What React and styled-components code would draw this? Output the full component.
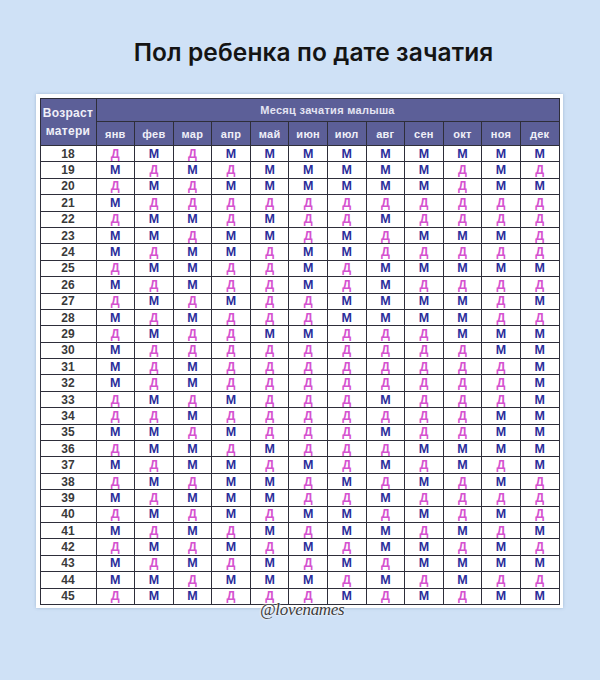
import styled, { createGlobalStyle } from "styled-components";

const GlobalStyle = createGlobalStyle`
    html, body {
        margin: 0;
        padding: 0;
        background: #cfe1f6;
    }
`

const MONTHS = ["янв", "фев", "мар", "апр", "май", "июн", "июл", "авг", "сен", "окт", "ноя", "дек"];

// one string per mother's age, 18..45 (Д = girl, М = boy)
const ROWS = [
    "ДМДМММММММММ",
    "МДМДМММММДМД",
    "ДМДММММММДММ",
    "МДДДДДДДДДДД",
    "ДММДМДДМДДДД",
    "ММДММДМДМММД",
    "МДММДММДДДДД",
    "ДММДДМДМММММ",
    "МДМДДМДМДДДД",
    "ДМДМДДММММДМ",
    "МДМДДДММММДД",
    "ДМДДММДДДМММ",
    "МДДДДДДДДДММ",
    "МДМДДДДДДДДМ",
    "МДМДДДДДДДДМ",
    "ДМДМДДДМДДДМ",
    "ДДМДДДДДДДММ",
    "ММДМДДДМДДММ",
    "ДММДМДДДММММ",
    "МДММДМДМДМДМ",
    "ДМДММДМДМДМД",
    "МДМММДДМДДДД",
    "ДМДМДММДМДМД",
    "МДМДМДММДМДМ",
    "ДМДМДМДММДМД",
    "МДМДМДМДММММ",
    "ММДМММДМДМДД",
    "ДММДДДМДМДММ",
];

const App = () => {
    return (
        <>
            <GlobalStyle />
            <Page>
                <Title>Пол ребенка по дате зачатия</Title>
                <Card>
                    <Table>
                        <colgroup>
                            <col style={{ width: 56 }} />
                            {MONTHS.map(m => <col key={m} />)}
                        </colgroup>
                        <thead>
                            <tr>
                                <HeadCell rowSpan={2} $age>Возраст<br />матери</HeadCell>
                                <HeadCell colSpan={12} $top>Месяц зачатия малыша</HeadCell>
                            </tr>
                            <tr>
                                {MONTHS.map(m => <HeadCell key={m} $month>{m}</HeadCell>)}
                            </tr>
                        </thead>
                        <tbody>
                            {ROWS.map((row, i) => (
                                <Row key={i}>
                                    <AgeCell>{18 + i}</AgeCell>
                                    {row.split("").map((g, j) => (
                                        <Cell key={j} $girl={g === "Д"}>{g}</Cell>
                                    ))}
                                </Row>
                            ))}
                        </tbody>
                    </Table>
                    <Watermark>@lovenames</Watermark>
                </Card>
            </Page>
        </>
    )
}

const Page = styled.div`
    width: 600px;
    height: 680px;
    display: flex;
    flex-direction: column;
    align-items: center;
    padding-top: 37px;
    box-sizing: border-box;
`

const Title = styled.h1`
    margin: 0 0 0 27px;
    font-family: "Inter", "Roboto", sans-serif;
    font-weight: 600;
    font-size: 24.5px;
    line-height: 30px;
    color: #141414;
    letter-spacing: 0.1px;
`

const Card = styled.div`
    position: relative;
    margin-top: 27px;
    margin-left: -2px;
    padding: 4px 3px 3px 4px;
    background: #ffffff;
    box-shadow: 0 0 3px rgba(80, 110, 150, 0.35);
`

const Table = styled.table`
    width: 520px;
    table-layout: fixed;
    border-collapse: collapse;
    border: 1.5px solid #2e2e3a;
    font-family: "Liberation Sans Narrow", "Liberation Sans", Arial, sans-serif;
    font-weight: bold;
`

const HeadCell = styled.th`
    background: #5c5f98;
    color: ${({ $top }) => ($top ? "#e4e4f2" : "#f0f0f8")};
    font-size: ${({ $age }) => ($age ? "12px" : "11px")};
    line-height: ${({ $age }) => ($age ? "18px" : "14px")};
    height: ${({ $top }) => ($top ? "22px" : "23px")};
    padding: 0;
    text-align: center;
    letter-spacing: 0.3px;
    border: 1px solid #2e2e3a;
    border-top: ${({ $month }) => ($month ? "1px solid #2e2e3a" : "none")};
    ${({ $top }) => $top && "border-bottom: 1px solid #2e2e3a;"}
`

const Row = styled.tr`
    height: 16.4px;
`

const AgeCell = styled.td`
    padding: 0;
    height: 15.4px;
    border: 1px solid #2e2e3a;
    text-align: center;
    font-size: 12px;
    line-height: 14px;
    color: #3a3a3a;
    background: #ffffff;
`

const Cell = styled.td`
    padding: 0;
    height: 15.4px;
    border: 1px solid #2e2e3a;
    text-align: center;
    font-size: 12.5px;
    line-height: 14px;
    color: ${({ $girl }) => ($girl ? "#d552cf" : "#2b2d9a")};
    background: #ffffff;
`

const Watermark = styled.span`
    position: absolute;
    left: 50%;
    bottom: -12px;
    transform: translateX(-39px);
    font-family: "Liberation Serif", serif;
    font-style: italic;
    font-size: 17px;
    letter-spacing: -0.3px;
    color: #3c3c3c;
    text-shadow: 0 0 2px #ffffff, 0 0 2px #ffffff;
`

export default App;
